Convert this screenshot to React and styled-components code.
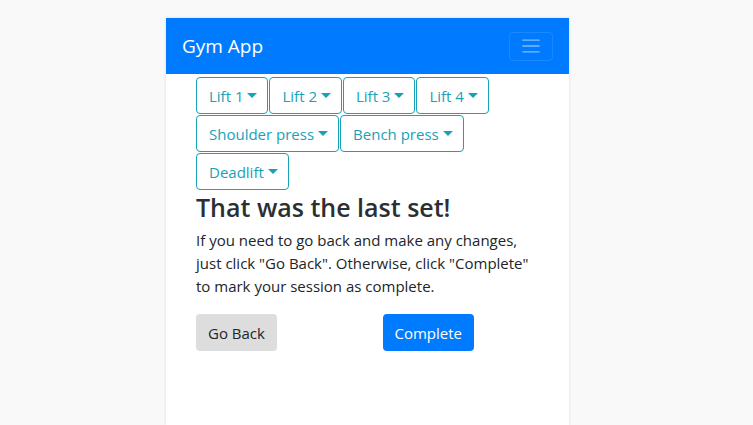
import React from 'react';
import styled, { createGlobalStyle } from 'styled-components';

const GlobalStyle = createGlobalStyle`
  html, body {
    margin: 0;
    padding: 0;
    background: #f9f9f9;
    font-family: "Open Sans", "Noto Sans", sans-serif;
    color: #212529;
  }
`;

const Page = styled.div`
  display: flex;
  justify-content: center;
  padding: 18px 18px 0 0;
  min-height: 425px;
  box-sizing: border-box;
`;

const Card = styled.div`
  width: 403px;
  min-height: 407px;
  background: #fff;
  box-shadow: 0 0 3px rgba(0, 0, 0, 0.12);
`;

const Navbar = styled.nav`
  height: 56px;
  background: #007bff;
  display: flex;
  align-items: center;
  justify-content: space-between;
  padding: 0 16px;
`;

const Brand = styled.span`
  color: #fff;
  font-size: 19px;
`;

const Toggler = styled.button`
  width: 44px;
  height: 29px;
  border: 1px solid rgba(255, 255, 255, 0.1);
  border-radius: 4px;
  background: transparent;
  display: flex;
  align-items: center;
  justify-content: center;
  padding: 0;
`;

const Content = styled.div`
  padding: 3px 30px 0;
`;

const LiftList = styled.div`
  display: flex;
  flex-wrap: wrap;
  gap: 1px;
`;

const LiftButton = styled.button`
  font: inherit;
  font-size: 15px;
  height: 37px;
  padding: 0 10px 0 12px;
  color: #17a2b8;
  background: #fff;
  border: 1px solid #17a2b8;
  border-radius: 4px;
  display: flex;
  align-items: center;
  &::after {
    content: '';
    margin-left: 4px;
    border-top: 5px solid #17a2b8;
    border-left: 5px solid transparent;
    border-right: 5px solid transparent;
  }
`;

const Heading = styled.h3`
  font-size: 25px;
  font-weight: 600;
  line-height: 1.2;
  margin: 2px 0 7px;
  color: #2b2f33;
`;

const Text = styled.p`
  font-size: 15px;
  line-height: 23px;
  margin: 0 0 16px;
`;

const Actions = styled.div`
  display: grid;
  grid-template-columns: 1fr 1fr;
  column-gap: 30px;
  align-items: start;
`;

const ActionButton = styled.button`
  justify-self: start;
  font: inherit;
  font-size: 15px;
  height: 37px;
  padding: 0 12px;
  border: none;
  border-radius: 4px;
  background: ${p => (p.$primary ? '#007bff' : '#dddddd')};
  color: ${p => (p.$primary ? '#fff' : '#212529')};
`;

const lifts = ['Lift 1', 'Lift 2', 'Lift 3', 'Lift 4', 'Shoulder press', 'Bench press', 'Deadlift'];

export default function App() {
  return (
    <>
      <GlobalStyle />
      <Page>
        <Card>
          <Navbar>
            <Brand>Gym App</Brand>
            <Toggler aria-label="menu">
              <svg width="22" height="22" viewBox="0 0 30 30">
                <path
                  d="M4 7h22M4 15h22M4 23h22"
                  stroke="rgba(255,255,255,0.5)"
                  strokeWidth="2"
                  strokeLinecap="round"
                />
              </svg>
            </Toggler>
          </Navbar>
          <Content>
            <LiftList>
              {lifts.map(l => (
                <LiftButton key={l}>{l}</LiftButton>
              ))}
            </LiftList>
            <Heading>That was the last set!</Heading>
            <Text>
              If you need to go back and make any changes, just click "Go Back". Otherwise, click
              "Complete" to mark your session as complete.
            </Text>
            <Actions>
              <ActionButton>Go Back</ActionButton>
              <ActionButton $primary>Complete</ActionButton>
            </Actions>
          </Content>
        </Card>
      </Page>
    </>
  );
}
